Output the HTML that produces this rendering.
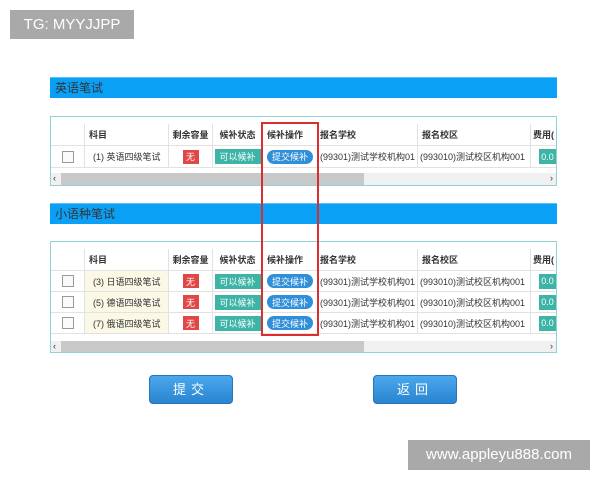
<!DOCTYPE html>
<html><head><meta charset="utf-8"><style>
*{margin:0;padding:0;box-sizing:border-box}
body{width:600px;height:480px;background:#fff;position:relative;overflow:hidden;font-family:"Liberation Sans","Noto Sans CJK SC",sans-serif;font-size:9px;color:#333}
.a{position:absolute}
.bar{position:absolute;left:50px;width:507px;height:21px;background:#0aa0f5;border-top:1px solid #5cc4fa;color:#333;font-size:12px;line-height:20px;padding-left:5px}
.tbl{position:absolute;left:50px;width:507px;border:1px solid #8fd3d3;background:#fff;overflow:hidden}
.row{position:absolute;left:0;width:505px;border-bottom:1px solid #e2e2e2}
.c{position:absolute;top:0;height:100%;border-right:1px solid #e2e2e2;display:flex;align-items:center;white-space:nowrap;overflow:hidden}
.h{font-weight:bold;color:#333}
.cb{width:12px;height:12px;border:1px solid #999;background:#fafafa}
.red{background:#e04848;color:#fff;width:16px;height:14px;display:flex;align-items:center;justify-content:center}
.tl{background:#3db4a6;color:#fff;height:15px;width:46px;display:flex;align-items:center;justify-content:center}
.bl{background:#2f8fd8;color:#fff;height:14px;width:46px;border-radius:7px;display:flex;align-items:center;justify-content:center}
.sb{position:absolute;left:0;width:505px;height:12px;background:#f0f0f0}
.sb i{position:absolute;left:10px;top:0;height:12px;background:#c8c8c8}
.btn{position:absolute;width:84px;height:29px;border-radius:4px;background:linear-gradient(#4aa8ec,#2a84d0);border:1px solid #2576bd;color:#fff;font-size:13px;letter-spacing:5px;text-align:center;line-height:27px}
</style></head><body>
<div class="a" style="left:10px;top:10px;width:124px;height:29px;background:#a9a9a9;color:#fff;font-size:15px;line-height:29px;text-align:center">TG: MYYJJPP</div>

<div class="bar" style="top:77px">英语笔试</div>
<div class="tbl" style="top:116px;height:70px">
 <div class="row" style="top:7px;height:22px">
  <div class="c" style="left:0;width:34px"></div>
  <div class="c h" style="left:34px;width:84px;padding-left:4px">科目</div>
  <div class="c h" style="left:118px;width:44px;justify-content:center">剩余容量</div>
  <div class="c h" style="left:162px;width:50px;justify-content:center">候补状态</div>
  <div class="c h" style="left:212px;width:55px;padding-left:4px">候补操作</div>
  <div class="c h" style="left:267px;width:100px;padding-left:2px">报名学校</div>
  <div class="c h" style="left:367px;width:113px;padding-left:4px">报名校区</div>
  <div class="c h" style="left:480px;width:25px;border:none;padding-left:2px">费用(</div>
 </div>
 <div class="row" style="top:29px;height:22px">
  <div class="c" style="left:0;width:34px;justify-content:center"><div class="cb"></div></div>
  <div class="c" style="left:34px;width:84px;padding-left:8px">(1) 英语四级笔试</div>
  <div class="c" style="left:118px;width:44px;justify-content:center"><div class="red">无</div></div>
  <div class="c" style="left:162px;width:50px;justify-content:center"><div class="tl">可以候补</div></div>
  <div class="c" style="left:212px;width:55px;justify-content:center"><div class="bl">提交候补</div></div>
  <div class="c" style="left:267px;width:100px;padding-left:2px">(99301)测试学校机构01</div>
  <div class="c" style="left:367px;width:113px;padding-left:2px">(993010)测试校区机构001</div>
  <div class="c" style="left:480px;width:25px;border:none;padding-left:8px"><div class="tl" style="width:20px">0.0</div></div>
 </div>
 <div class="sb" style="top:56px"><i style="width:303px"></i><span class="a" style="left:2px;top:0;font-size:9px">‹</span><span class="a" style="right:3px;top:0;font-size:9px">›</span></div>
</div>

<div class="bar" style="top:203px">小语种笔试</div>
<div class="tbl" style="top:241px;height:112px">
 <div class="row" style="top:7px;height:22px">
  <div class="c" style="left:0;width:34px"></div>
  <div class="c h" style="left:34px;width:84px;padding-left:4px">科目</div>
  <div class="c h" style="left:118px;width:44px;justify-content:center">剩余容量</div>
  <div class="c h" style="left:162px;width:50px;justify-content:center">候补状态</div>
  <div class="c h" style="left:212px;width:55px;padding-left:4px">候补操作</div>
  <div class="c h" style="left:267px;width:100px;padding-left:2px">报名学校</div>
  <div class="c h" style="left:367px;width:113px;padding-left:4px">报名校区</div>
  <div class="c h" style="left:480px;width:25px;border:none;padding-left:2px">费用(</div>
 </div>
 <div class="row" style="top:29px;height:21px">
  <div class="c" style="left:0;width:34px;justify-content:center"><div class="cb"></div></div>
  <div class="c" style="left:34px;width:84px;padding-left:8px;background:#fbf8e6">(3) 日语四级笔试</div>
  <div class="c" style="left:118px;width:44px;justify-content:center"><div class="red">无</div></div>
  <div class="c" style="left:162px;width:50px;justify-content:center"><div class="tl">可以候补</div></div>
  <div class="c" style="left:212px;width:55px;justify-content:center"><div class="bl">提交候补</div></div>
  <div class="c" style="left:267px;width:100px;padding-left:2px">(99301)测试学校机构01</div>
  <div class="c" style="left:367px;width:113px;padding-left:2px">(993010)测试校区机构001</div>
  <div class="c" style="left:480px;width:25px;border:none;padding-left:8px"><div class="tl" style="width:20px">0.0</div></div>
 </div>
 <div class="row" style="top:50px;height:21px">
  <div class="c" style="left:0;width:34px;justify-content:center"><div class="cb"></div></div>
  <div class="c" style="left:34px;width:84px;padding-left:8px;background:#fbf8e6">(5) 德语四级笔试</div>
  <div class="c" style="left:118px;width:44px;justify-content:center"><div class="red">无</div></div>
  <div class="c" style="left:162px;width:50px;justify-content:center"><div class="tl">可以候补</div></div>
  <div class="c" style="left:212px;width:55px;justify-content:center"><div class="bl">提交候补</div></div>
  <div class="c" style="left:267px;width:100px;padding-left:2px">(99301)测试学校机构01</div>
  <div class="c" style="left:367px;width:113px;padding-left:2px">(993010)测试校区机构001</div>
  <div class="c" style="left:480px;width:25px;border:none;padding-left:8px"><div class="tl" style="width:20px">0.0</div></div>
 </div>
 <div class="row" style="top:71px;height:21px">
  <div class="c" style="left:0;width:34px;justify-content:center"><div class="cb"></div></div>
  <div class="c" style="left:34px;width:84px;padding-left:8px;background:#fbf8e6">(7) 俄语四级笔试</div>
  <div class="c" style="left:118px;width:44px;justify-content:center"><div class="red">无</div></div>
  <div class="c" style="left:162px;width:50px;justify-content:center"><div class="tl">可以候补</div></div>
  <div class="c" style="left:212px;width:55px;justify-content:center"><div class="bl">提交候补</div></div>
  <div class="c" style="left:267px;width:100px;padding-left:2px">(99301)测试学校机构01</div>
  <div class="c" style="left:367px;width:113px;padding-left:2px">(993010)测试校区机构001</div>
  <div class="c" style="left:480px;width:25px;border:none;padding-left:8px"><div class="tl" style="width:20px">0.0</div></div>
 </div>
 <div class="sb" style="top:99px"><i style="width:303px"></i><span class="a" style="left:2px;top:0;font-size:9px">‹</span><span class="a" style="right:3px;top:0;font-size:9px">›</span></div>
</div>

<div class="a" style="left:261px;top:122px;width:58px;height:214px;border:2px solid #d9302f"></div>

<div class="btn" style="left:149px;top:375px">提交</div>
<div class="btn" style="left:373px;top:375px">返回</div>

<div class="a" style="left:408px;top:440px;width:182px;height:30px;background:#a9a9a9;color:#fff;font-size:15px;line-height:30px;text-align:center">www.appleyu888.com</div>
</body></html>
